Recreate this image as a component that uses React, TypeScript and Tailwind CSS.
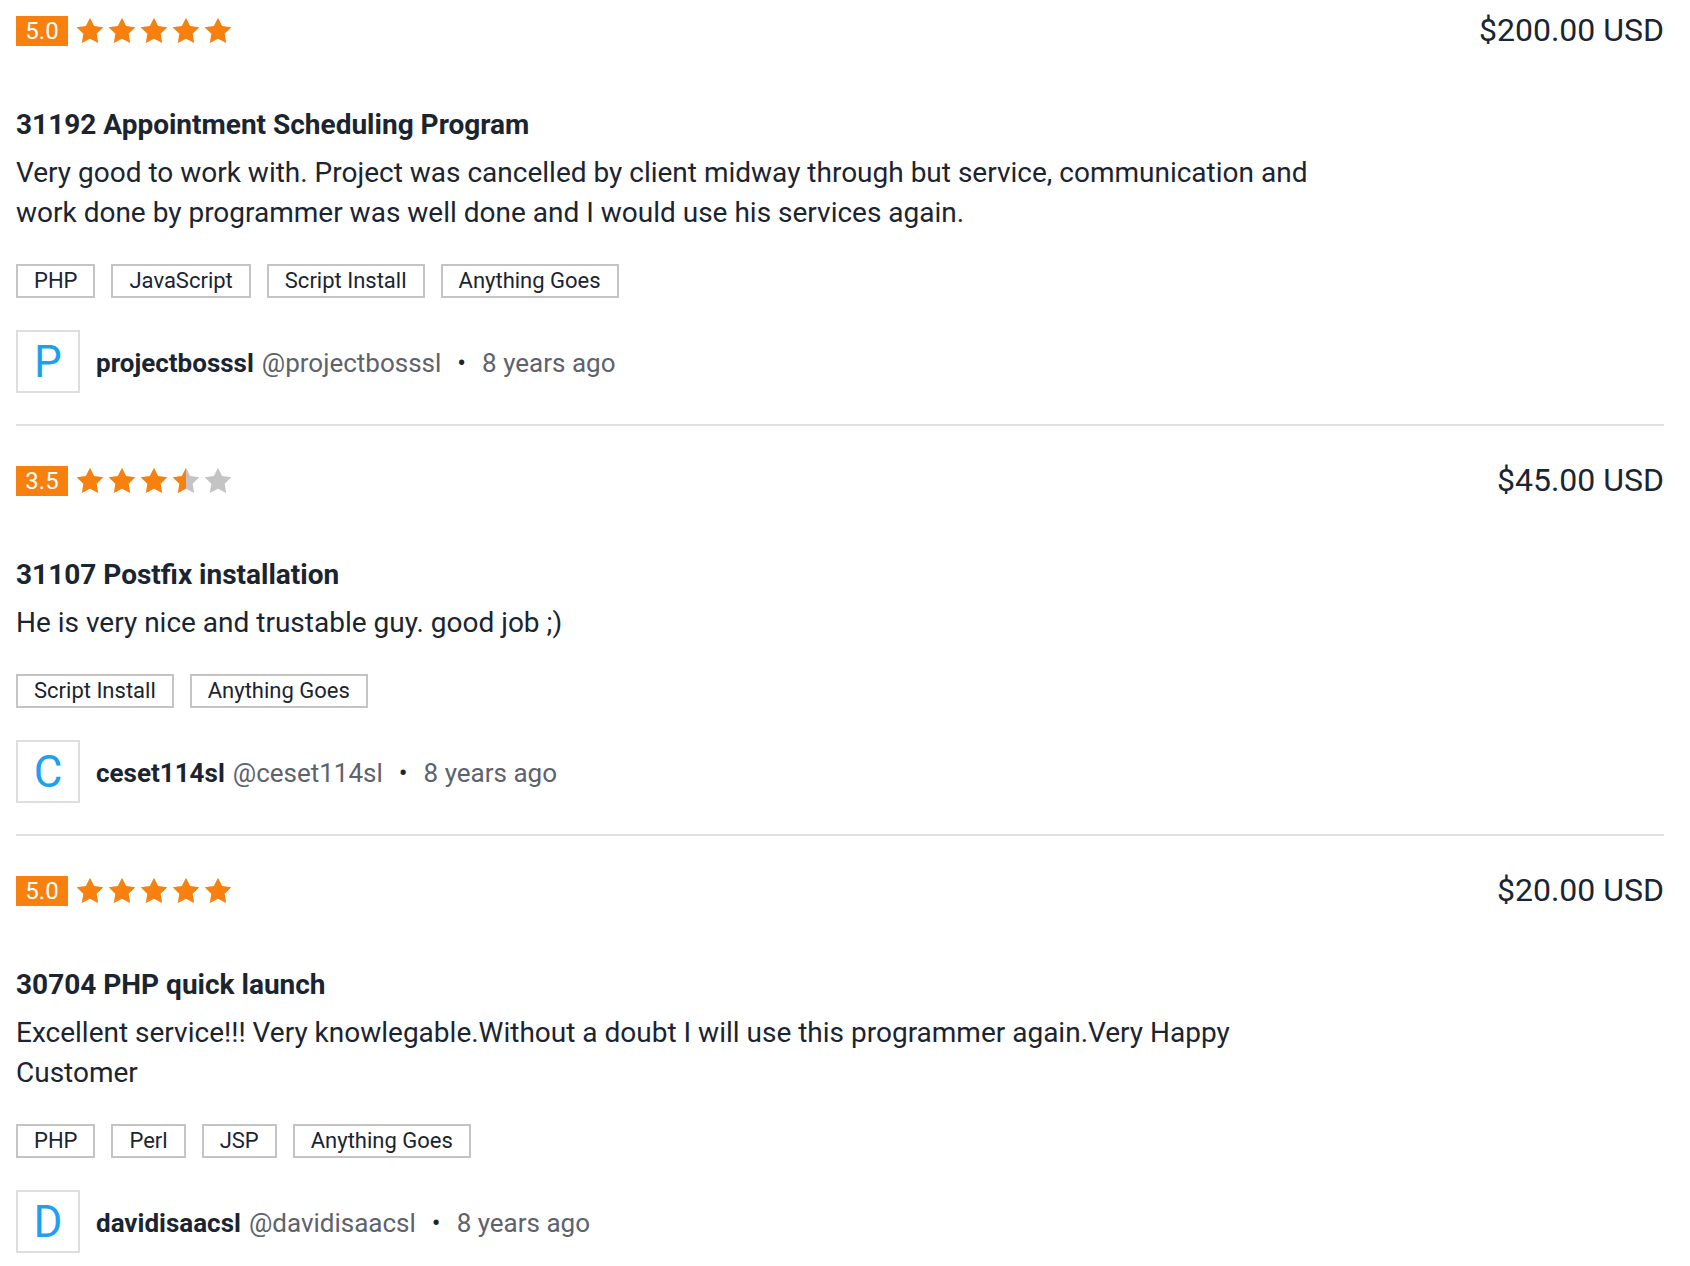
type Review = {
  rating: number
  price: string
  title: string
  body: string
  tags: string[]
  user: string
  ago: string
}

const reviews: Review[] = [
  {
    rating: 5,
    price: '$200.00 USD',
    title: '31192 Appointment Scheduling Program',
    body: 'Very good to work with. Project was cancelled by client midway through but service, communication and work done by programmer was well done and I would use his services again.',
    tags: ['PHP', 'JavaScript', 'Script Install', 'Anything Goes'],
    user: 'projectbosssl',
    ago: '8 years ago',
  },
  {
    rating: 3.5,
    price: '$45.00 USD',
    title: '31107 Postfix installation',
    body: 'He is very nice and trustable guy. good job ;)',
    tags: ['Script Install', 'Anything Goes'],
    user: 'ceset114sl',
    ago: '8 years ago',
  },
  {
    rating: 5,
    price: '$20.00 USD',
    title: '30704 PHP quick launch',
    body: 'Excellent service!!! Very knowlegable.Without a doubt I will use this programmer again.Very Happy Customer',
    tags: ['PHP', 'Perl', 'JSP', 'Anything Goes'],
    user: 'davidisaacsl',
    ago: '8 years ago',
  },
]

const STAR = '12,2 15.09,8.26 22,9.27 17,14.14 18.18,21.02 12,17.77 5.82,21.02 7,14.14 2,9.27 8.91,8.26'

const Star = ({ fill, id }: { fill: 'full' | 'half' | 'empty'; id: string }) => (
  <svg width="32" height="32" viewBox="0 0 24 24">
    {fill === 'half' && (
      <defs>
        <linearGradient id={id} x1="0" x2="1" y1="0" y2="0">
          <stop offset="50%" stopColor="#f7800f" />
          <stop offset="50%" stopColor="#c4c4c4" />
        </linearGradient>
      </defs>
    )}
    <polygon
      points={STAR}
      fill={fill === 'full' ? '#f7800f' : fill === 'half' ? `url(#${id})` : '#c4c4c4'}
    />
  </svg>
)

const Stars = ({ rating, idx }: { rating: number; idx: number }) => (
  <div className="flex ml-[6px]">
    {[1, 2, 3, 4, 5].map((n) => {
      const fill = rating >= n ? 'full' : rating >= n - 0.5 ? 'half' : 'empty'
      return <Star key={n} fill={fill} id={`half-${idx}-${n}`} />
    })}
  </div>
)

const ReviewItem = ({ review, idx, last }: { review: Review; idx: number; last: boolean }) => (
  <div className={last ? '' : 'border-b-2 border-[#e0e0e0] pb-[31px] mb-[40px]'}>
    <div className="flex items-center justify-between h-[30px]">
      <div className="flex items-center">
        <span className="bg-[#f7800f] text-white text-[24px] leading-[30px] h-[30px] w-[52px] text-center">
          {review.rating.toFixed(1)}
        </span>
        <Stars rating={review.rating} idx={idx} />
      </div>
      <span className="text-[32px] leading-[30px] text-[#1b2431] mb-[3px]">{review.price}</span>
    </div>

    <h3 className="mt-[63px] text-[28px] leading-[32px] font-bold text-[#1b2431]">{review.title}</h3>
    <p className="mt-[12px] text-[28px] leading-[40px] text-[#1b2431] max-w-[1320px]">{review.body}</p>

    <div className="mt-[31px] flex gap-4">
      {review.tags.map((tag) => (
        <span
          key={tag}
          className="border-2 border-[#c4c4c4] h-[34px] px-4 text-[22px] leading-[30px] text-[#1b2431]"
        >
          {tag}
        </span>
      ))}
    </div>

    <div className="mt-[32px] flex items-center">
      <div className="w-16 h-[63px] border-2 border-[#dedede] flex items-center justify-center text-[44px] font-normal text-[#1ea0f0]">
        {review.user[0].toUpperCase()}
      </div>
      <div className="ml-4 mt-[3px] flex items-baseline text-[26px]">
        <span className="font-bold text-[#1b2431]">{review.user}</span>
        <span className="ml-[8px] text-[#5d626b]">@{review.user}</span>
        <span className="mx-[16px] text-[#1b2431]">•</span>
        <span className="text-[#5d626b]">{review.ago}</span>
      </div>
    </div>
  </div>
)

export default function App() {
  return (
    <div className="bg-white min-h-screen pt-4 pl-4 pr-[26px] font-['Roboto',sans-serif]">
      {reviews.map((review, i) => (
        <ReviewItem key={review.title} review={review} idx={i} last={i === reviews.length - 1} />
      ))}
    </div>
  )
}
